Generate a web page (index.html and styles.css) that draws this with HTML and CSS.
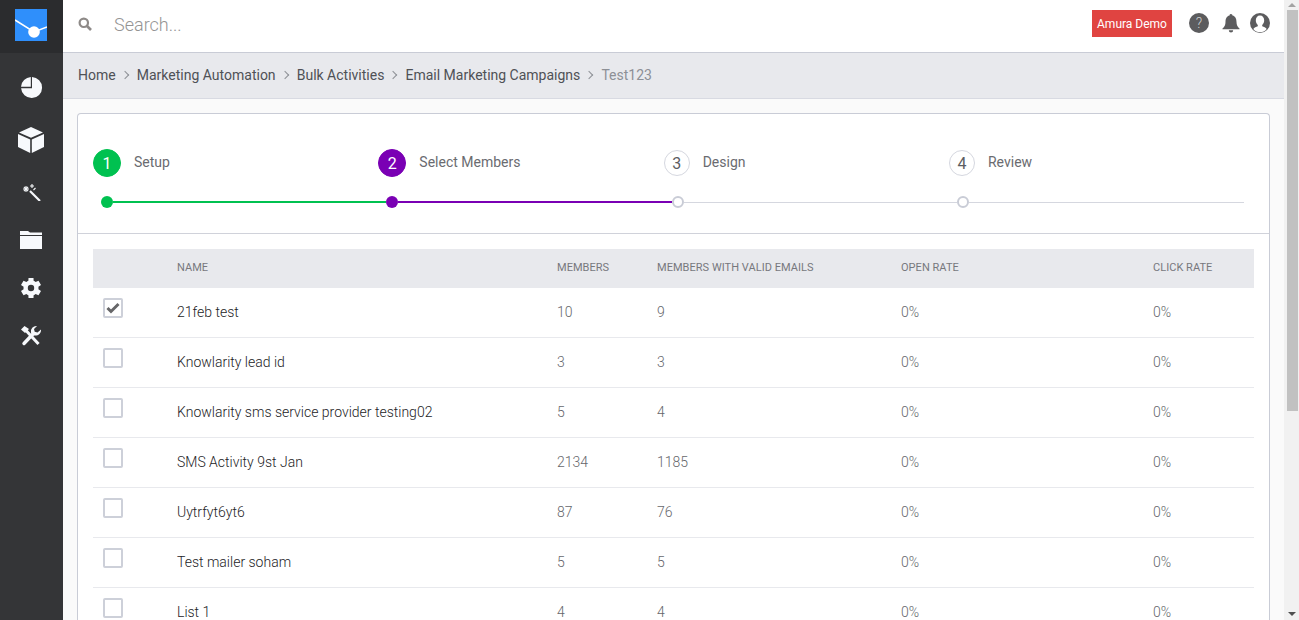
FILE: index.html
```html
<!DOCTYPE html>
<html lang="en">
<head>
<meta charset="utf-8">
<title>Email Marketing Campaigns</title>
<link rel="stylesheet" href="styles.css">
</head>
<body>
<div class="app">
  <aside class="sidebar">
    <div class="logo-wrap">
      <svg class="logo" width="32" height="32" viewBox="0 0 32 32">
        <rect width="32" height="32" fill="#2f8ffb"/>
        <path d="M0 11 L19 23 L32 18" fill="none" stroke="#fff" stroke-width="1.500"/>
        <circle cx="19" cy="23" r="5.800" fill="#fff"/>
      </svg>
    </div>
    <nav class="nav">
      <svg class="nav-icon" width="24" height="24" viewBox="0 0 24 24"><path fill="#f7f9fc" d="M13 2.100a10.500 10.500 0 1 1-10.900 11.200h10.900z"/><path fill="#f7f9fc" d="M11.800 11.800H2a10.500 10.500 0 0 1 9.800-9.800z"/></svg>
      <svg class="nav-icon" width="28" height="28" viewBox="0 0 28 28"><path fill="#f7f9fc" d="M14 1 26 6.500 14 11.800 2 6.500z"/><path fill="#f7f9fc" d="M1 8 13.200 13.400V27L1 21z"/><path fill="#f7f9fc" d="M27 8 14.800 13.400V27L27 21z"/></svg>
      <svg class="nav-icon" width="20" height="20" viewBox="0 0 20 20"><path stroke="#f7f9fc" stroke-width="2.200" d="M9 10 19 20"/><path stroke="#f7f9fc" stroke-width="1.100" fill="none" d="M5 5v6M2 8h6M2.900 5.900l4.200 4.200M7.100 5.900l-4.200 4.200M11 3v4M9 5h4M14.500 7l-2 2"/></svg>
      <svg class="nav-icon" width="24" height="20" viewBox="0 0 24 20"><path fill="#f7f9fc" d="M1 1h8l2 1.500h12V5H1z"/><path fill="#f7f9fc" d="M1 6h22v13H1z"/></svg>
      <svg class="nav-icon" width="24" height="24" viewBox="0 0 24 24"><path fill="#f7f9fc" fill-rule="evenodd" d="M19.400 13.200a7.500 7.500 0 0 0 0-2.400l2.600-1.700-2.500-4.400-2.900 1.200a7.500 7.500 0 0 0-2-1.200L14.500 2h-5l-.1 2.700a7.500 7.500 0 0 0-2 1.200L4.500 4.700 2 9.100l2.600 1.700a7.500 7.500 0 0 0 0 2.400L2 14.900l2.500 4.400 2.900-1.200a7.500 7.500 0 0 0 2 1.200l.1 2.700h5l.1-2.700a7.500 7.500 0 0 0 2-1.200l2.900 1.200 2.500-4.400zM12 15.200a3.200 3.200 0 1 1 0-6.400 3.200 3.200 0 0 1 0 6.400z"/></svg>
      <svg class="nav-icon" width="22" height="22" viewBox="0 0 22 22"><path stroke="#f7f9fc" stroke-width="3.400" stroke-linecap="round" d="M4 18.500 13 9"/><path fill="#f7f9fc" d="M21 4.500a5.500 5.500 0 0 1-7.500 5.700l-2.500-2.500a5.500 5.500 0 0 1 6-6.700l-3 3 .7 2.800 2.800.7z"/><path stroke="#f7f9fc" stroke-width="3" d="M6 5.500l12.500 13.500"/><path fill="#f7f9fc" d="M1 4.500 4.500 1 9 4 5 8z"/></svg>
    </nav>
  </aside>

  <main class="main">
    <header class="topbar">
      <svg class="search-icon" width="14" height="14" viewBox="0 0 14 14"><circle cx="5.800" cy="5.800" r="4.200" fill="none" stroke="#8e8a88" stroke-width="2.200"/><path d="M9 9l4 4" stroke="#8e8a88" stroke-width="2.600"/></svg>
      <span class="search-text">Search...</span>
      <span class="demo-badge">Amura Demo</span>
      <svg class="top-icon help" width="20" height="20" viewBox="0 0 20 20"><circle cx="10" cy="10" r="10" fill="#5c5c5e"/><text x="10" y="15" text-anchor="middle" class="help-mark">?</text></svg>
      <svg class="top-icon bell" width="18" height="20" viewBox="0 0 18 20"><path fill="#5c5c5e" d="M9 1a1.500 1.500 0 0 1 1.500 1.500C13.500 3.200 14.500 6 14.500 9c0 3 1 5 3 6.500v.8H.5v-.8c2-1.500 3-3.500 3-6.500 0-3 1-5.800 4-6.500A1.500 1.500 0 0 1 9 1z"/><path fill="#5c5c5e" d="M6.800 17.300h4.400a2.200 2.200 0 0 1-4.400 0z"/></svg>
      <svg class="top-icon user" width="20" height="20" viewBox="0 0 20 20"><circle cx="10" cy="10" r="10" fill="#5c5c5e"/><path fill="#fff" d="M10 2.500c2.600 0 4.200 2.100 4.200 4.800 0 2-.8 3.800-2 4.700v1.300c1.700.6 3.500 1.200 4.500 2.700a8.600 8.600 0 0 1-13.400 0c1-1.500 2.800-2.100 4.500-2.700V12c-1.200-.9-2-2.700-2-4.700 0-2.700 1.600-4.800 4.200-4.800z"/></svg>
    </header>

    <div class="breadcrumb">
      <span class="crumb">Home</span><span class="sep"></span>
      <span class="crumb">Marketing Automation</span><span class="sep"></span>
      <span class="crumb">Bulk Activities</span><span class="sep"></span>
      <span class="crumb">Email Marketing Campaigns</span><span class="sep"></span>
      <span class="crumb current">Test123</span>
    </div>

    <section class="content">
      <div class="card">
        <div class="wizard">
          <div class="steps">
            <div class="step"><span class="num done">1</span><span class="step-label">Setup</span></div>
            <div class="step"><span class="num active">2</span><span class="step-label">Select Members</span></div>
            <div class="step"><span class="num">3</span><span class="step-label">Design</span></div>
            <div class="step last"><span class="num">4</span><span class="step-label">Review</span></div>
          </div>
          <div class="track">
            <div class="seg"><span class="dot green"></span><span class="line green"></span></div>
            <div class="seg"><span class="dot purple"></span><span class="line purple"></span></div>
            <div class="seg"><span class="dot open"></span><span class="line grey"></span></div>
            <div class="seg last"><span class="dot open"></span><span class="line grey"></span></div>
          </div>
        </div>
        <div class="table-wrap">
          <div class="row head">
            <div></div><div>NAME</div><div>MEMBERS</div><div>MEMBERS WITH VALID EMAILS</div><div>OPEN RATE</div><div>CLICK RATE</div>
          </div>
          <div class="row">
            <div><span class="check on"><svg width="14" height="12" viewBox="0 0 14 12"><path d="M1.500 6 5 9.500 12.500 2" fill="none" stroke="#666668" stroke-width="3"/></svg></span></div>
            <div class="name">21feb test</div><div>10</div><div>9</div><div>0%</div><div>0%</div>
          </div>
          <div class="row"><div><span class="check"></span></div><div class="name">Knowlarity lead id</div><div>3</div><div>3</div><div>0%</div><div>0%</div></div>
          <div class="row"><div><span class="check"></span></div><div class="name">Knowlarity sms service provider testing02</div><div>5</div><div>4</div><div>0%</div><div>0%</div></div>
          <div class="row"><div><span class="check"></span></div><div class="name">SMS Activity 9st Jan</div><div>2134</div><div>1185</div><div>0%</div><div>0%</div></div>
          <div class="row"><div><span class="check"></span></div><div class="name">Uytrfyt6yt6</div><div>87</div><div>76</div><div>0%</div><div>0%</div></div>
          <div class="row"><div><span class="check"></span></div><div class="name">Test mailer soham</div><div>5</div><div>5</div><div>0%</div><div>0%</div></div>
          <div class="row"><div><span class="check"></span></div><div class="name">List 1</div><div>4</div><div>4</div><div>0%</div><div>0%</div></div>
        </div>
      </div>
    </section>
  </main>

  <div class="scrollbar">
    <span class="arrow up"></span>
    <span class="thumb"></span>
    <span class="rest"></span>
    <span class="arrow down"></span>
  </div>
</div>
</body>
</html>
```
FILE: styles.css
```css
* { box-sizing: border-box; }
html, body { margin: 0; height: 100%; overflow: hidden; }
body { font-family: Roboto, "Liberation Sans", sans-serif; font-size: 14px; color: #4a4a4a; background: #fafafa; }
.app { display: flex; height: 620px; width: 1299px; overflow: hidden; }

.sidebar { width: 63px; flex: none; background: #343537; padding-right: 1px; }
.logo-wrap { height: 53px; margin-right: -1px; padding-right: 1px; background: #2b2c2e; display: flex; align-items: flex-start; justify-content: center; padding-top: 9px; }
.nav { display: flex; flex-direction: column; align-items: center; }
.nav-icon { display: block; flex: none; }
.nav-icon:nth-child(1) { margin-top: 22px; }
.nav-icon:nth-child(2) { margin-top: 27px; }
.nav-icon:nth-child(3) { margin-top: 27px; }
.nav-icon:nth-child(4) { margin-top: 29px; }
.nav-icon:nth-child(5) { margin-top: 26px; }
.nav-icon:nth-child(6) { margin-top: 25px; }

.main { width: 1221px; flex: none; display: flex; flex-direction: column; min-height: 0; }
.topbar { height: 53px; flex: none; background: #fff; border-bottom: 1px solid #c9ccd6; display: flex; align-items: center; padding: 0 14px 4px 15px; }
.search-icon { flex: none; }
.search-text { font-size: 18px; font-weight: 300; color: #949494; margin-left: 22px; flex: 1; }
.demo-badge { background: #e04441; color: #fff; font-size: 12px; width: 80px; height: 27px; display: flex; align-items: center; justify-content: center; margin-right: 17px; margin-bottom: 1px; }
.top-icon { flex: none; margin-bottom: 2px; }
.top-icon.bell { margin-left: 13px; }
.top-icon.user { margin-left: 10px; }
.help-mark { font-family: Roboto, sans-serif; font-size: 14px; font-weight: 300; fill: #d0d0d0; }

.breadcrumb { height: 46px; flex: none; background: #e8e9ed; border-bottom: 1px solid #d8dae2; display: flex; align-items: center; padding: 0 0 1px 15px; }
.crumb { color: #4f5156; font-size: 14px; }
.crumb.current { color: #8d9096; }
.sep { width: 6px; height: 6px; border-top: 1px solid #8d9096; border-right: 1px solid #8d9096; transform: rotate(45deg); margin: 0 9.100px 0 6px; }

.content { flex: 1; min-height: 0; padding: 14px 14px 0; background: #fafafa; }
.card { background: #fff; border: 1px solid #c9ccd6; border-bottom: 0; border-radius: 4px 4px 0 0; height: 520px; overflow: hidden; }
.wizard { height: 120px; border-bottom: 1px solid #d0d2da; padding: 35px 25px 0 15px; }
.steps { display: flex; height: 42px; }
.step { width: 285.33px; display: flex; align-items: flex-start; flex: none; }
.step.last { flex: 1; width: auto; }
.num { width: 26px; height: 26px; margin-top: 1px; border-radius: 50%; display: flex; align-items: center; justify-content: center; font-size: 16px; border: 1px solid #d5d7df; color: #5c5d62; flex: none; }
.num.done { width: 28px; height: 28px; margin-top: 0; background: #00c150; border-color: #00c150; color: #fff; }
.num.active { width: 28px; height: 28px; margin-top: 0; background: #7a00b4; border-color: #7a00b4; color: #fff; }
.step-label { margin-left: 13px; color: #6a6b70; line-height: 26px; }
.track { display: flex; padding-left: 8px; margin-top: 5px; }
.seg { width: 285.33px; flex: none; display: flex; align-items: center; }
.seg.last { flex: 1; width: auto; }
.dot { width: 12px; height: 12px; border-radius: 50%; flex: none; }
.dot.green { background: #00c150; }
.dot.purple { background: #7a00b4; }
.dot.open { background: #fff; border: 2px solid #c9ccd6; }
.line { flex: 1; height: 2px; }
.line.green { background: #00c150; }
.line.purple { background: #7a00b4; }
.line.grey { height: 1px; background: #d5d7df; }

.table-wrap { padding: 15px 15px 0; }
.row { display: grid; grid-template-columns: 84px 380px 100px 244px 252px 101px; height: 50px; padding-bottom: 2px; align-items: center; border-bottom: 1px solid #e8e9ed; color: #66676c; font-weight: 300; }
.row.head { height: 39px; background: #e8e9ed; border-bottom: 0; font-size: 11px; font-weight: 400; letter-spacing: 0.04px; color: #77787d; }
.row .name { color: #232326; }
.row > div:first-child { padding-left: 10px; align-self: start; padding-top: 10px; }
.check { display: flex; align-items: center; justify-content: center; width: 20px; height: 20px; border: 2px solid #cdd0d9; border-radius: 2px; background: #fff; }

.scrollbar { width: 15px; flex: none; background: #f1f1f1; display: flex; flex-direction: column; align-items: center; }
.thumb { width: 11px; height: 401px; background: #c1c1c1; margin-left: 1px; flex: none; }
.rest { flex: 1; }
.arrow { width: 0; height: 0; border-left: 4px solid transparent; border-right: 4px solid transparent; flex: none; margin: 3px 0; }
.arrow.up { border-bottom: 4px solid #a3a3a3; }
.arrow.down { border-top: 4px solid #505050; margin-bottom: 4px; }
```
